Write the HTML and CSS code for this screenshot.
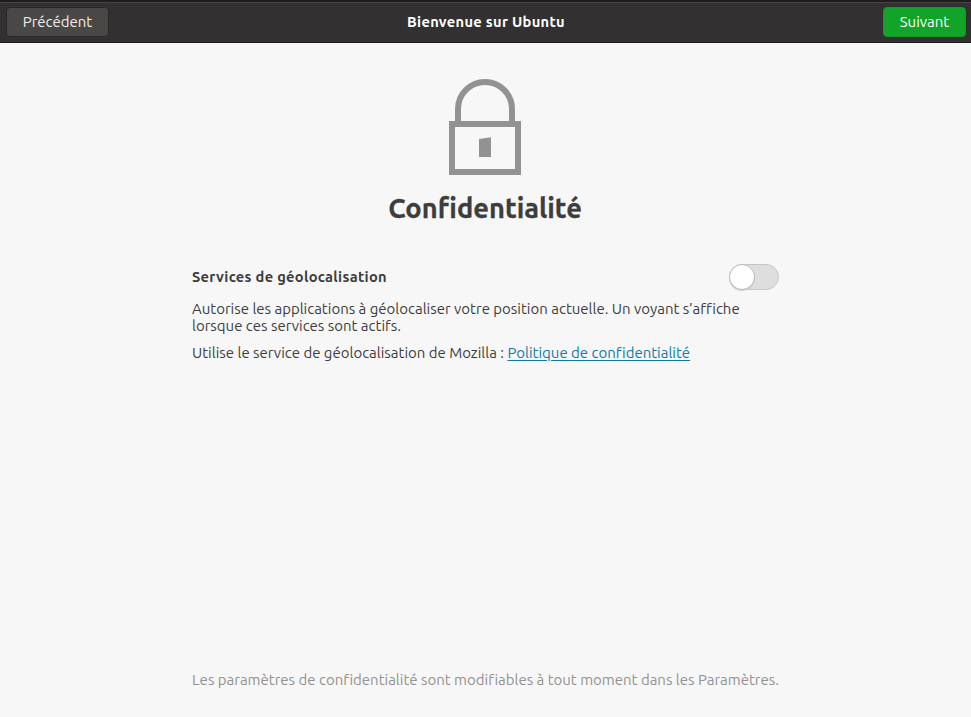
FILE: index.html
```html
<!DOCTYPE html>
<html lang="fr">
<head>
<meta charset="utf-8">
<title>Bienvenue sur Ubuntu</title>
<link rel="stylesheet" href="styles.css">
</head>
<body>
<div class="window">
  <header class="headerbar">
    <button class="btn btn-back">Précédent</button>
    <h1 class="window-title">Bienvenue sur Ubuntu</h1>
    <button class="btn btn-next">Suivant</button>
  </header>
  <main class="page">
    <svg class="lock" width="72" height="96" viewBox="0 0 72 96">
      <path d="M9 43V30a27 27 0 0 1 54 0v13" fill="none" stroke="#929292" stroke-width="6"/>
      <rect x="3" y="45" width="66" height="48" fill="none" stroke="#929292" stroke-width="6"/>
      <path d="M30 60l12-1.7V78H30z" fill="#929292"/>
    </svg>
    <h2 class="heading">Confidentialité</h2>
    <section class="content">
      <div class="row">
        <h3 class="label">Services de géolocalisation</h3>
        <div class="switch" role="switch" aria-checked="false"><div class="knob"></div></div>
      </div>
      <p class="text">Autorise les applications à géolocaliser votre position actuelle. Un voyant s’affiche<br>lorsque ces services sont actifs.</p>
      <p class="text">Utilise le service de géolocalisation de Mozilla : <a class="link" href="#">Politique de confidentialité</a></p>
    </section>
    <p class="footer">Les paramètres de confidentialité sont modifiables à tout moment dans les Paramètres.</p>
  </main>
</div>
</body>
</html>
```
FILE: styles.css
```css
* { box-sizing: border-box; margin: 0; padding: 0; }

body {
  background: #f7f7f7;
  color: #3d3d3d;
  font: 14.97px/17px "Ubuntu", "Noto Sans", sans-serif;
  font-variant-ligatures: no-common-ligatures;
}

.window {
  display: flex;
  flex-direction: column;
  height: 717px;
  overflow: hidden;
}

.headerbar {
  display: grid;
  grid-template-columns: 1fr auto 1fr;
  align-items: center;
  height: 43px;
  padding: 0 5px 0 6px;
  background: #323030;
  border-top: 2px solid #1f1c1d;
  border-bottom: 1px solid #1c1a1b;
  box-shadow: inset 0 1px #474546;
}

.window-title {
  color: #fff;
  font-size: 14.667px;
  line-height: 20px;
  letter-spacing: 0.3px;
  white-space: nowrap;
}

.btn {
  height: 30px;
  padding-bottom: 2px;
  border: 1px solid #2a2828;
  border-radius: 4px;
  color: #eeeeec;
  font: inherit;
  white-space: nowrap;
}

.btn-back {
  justify-self: start;
  width: 103px;
  background: #4a4846;
}

.btn-next {
  justify-self: end;
  width: 83px;
  background: #12a428;
  border-color: #109a25;
  color: #fff;
}

.page {
  flex: 1;
  display: flex;
  flex-direction: column;
  align-items: center;
  padding-top: 36px;
}

.lock { display: block; margin-right: 1px; }

.heading {
  margin: 15px 1px 0 0;
  font-size: 27.25px;
  line-height: 36px;
  white-space: nowrap;
  -webkit-text-stroke: 0.3px #3d3d3d;
}

.content { width: 587px; margin-top: 38px; }

.row {
  display: flex;
  align-items: center;
  justify-content: space-between;
  height: 26px;
}

.label {
  font-size: 14.667px;
  line-height: 20px;
  letter-spacing: 0.3px;
}

.switch {
  width: 50px;
  height: 26px;
  background: #dedede;
  border: 1px solid #c6c6c6;
  border-radius: 13px;
}

.knob {
  width: 26px;
  height: 26px;
  margin: -1px;
  background: #fff;
  border: 1px solid #bcbcbc;
  border-radius: 50%;
  box-shadow: 0 1px #cfcfcf;
}

.text {
  margin-top: 10px;
  white-space: nowrap;
}

.link { color: #0e7ba6; text-underline-offset: 2px; }

.footer {
  width: 587px;
  margin-top: auto;
  margin-bottom: 29px;
  color: #929292;
  white-space: nowrap;
}
```
